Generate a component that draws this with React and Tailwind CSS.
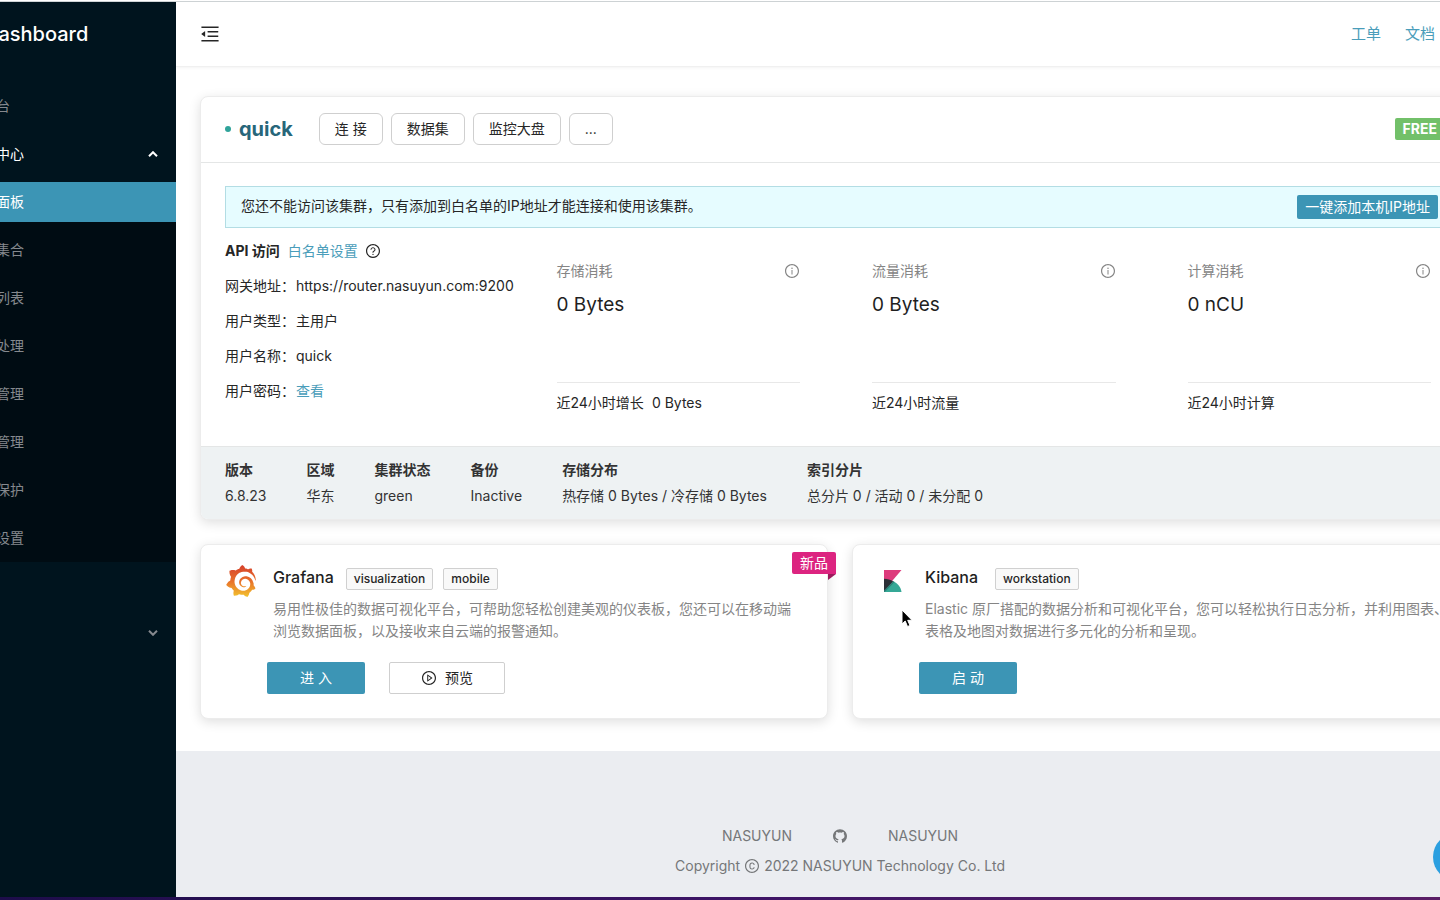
import clsx from "clsx";
import {
  AiOutlineMenuFold,
  AiOutlineQuestionCircle,
  AiOutlineInfoCircle,
  AiOutlinePlayCircle,
  AiOutlineGithub,
  AiOutlineCopyright,
} from "react-icons/ai";
import { SiGrafana } from "react-icons/si";

const subMenu = ["面板", "集合", "列表", "处理", "管理", "管理", "保护", "设置"];

const access = [
  { label: "网关地址", value: "https://router.nasuyun.com:9200" },
  { label: "用户类型", value: "主用户" },
  { label: "用户名称", value: "quick" },
  { label: "用户密码", value: "查看", link: true },
];

const stats = [
  { title: "存储消耗", value: "0 Bytes", footer: "近24小时增长", extra: "0 Bytes" },
  { title: "流量消耗", value: "0 Bytes", footer: "近24小时流量" },
  { title: "计算消耗", value: "0 nCU", footer: "近24小时计算" },
];

const info = [
  { label: "版本", value: "6.8.23" },
  { label: "区域", value: "华东" },
  { label: "集群状态", value: "green" },
  { label: "备份", value: "Inactive" },
  { label: "存储分布", value: "热存储 0 Bytes / 冷存储 0 Bytes" },
  { label: "索引分片", value: "总分片 0 / 活动 0 / 未分配 0" },
];

const Chevron = ({ up }) => (
  <svg viewBox="0 0 10 6" className="h-[6px] w-[10px]" fill="none" stroke="currentColor" strokeWidth="2">
    <path d={up ? "M1 5.2 5 1.2 9 5.2" : "M1 0.8 5 4.8 9 0.8"} />
  </svg>
);

const GrafanaLogo = () => (
  <>
    <svg className="absolute h-0 w-0">
      <defs>
        <linearGradient id="grafana" x1="0" y1="0" x2="0" y2="1">
          <stop offset="0" stopColor="#d5402b" />
          <stop offset="0.5" stopColor="#e8702a" />
          <stop offset="1" stopColor="#f2c22e" />
        </linearGradient>
      </defs>
    </svg>
    <SiGrafana className="h-8 w-8" fill="url(#grafana)" />
  </>
);

const KibanaLogo = () => (
  <svg viewBox="0 0 18 22" className="h-[22px] w-[18px]">
    <path fill="#dd3b7c" d="M0 0h17.500L0 20.500Z" />
    <path fill="#2b2f36" d="M0 8.800c3.400 0 6.500.9 9.300 2.400L0 22Z" />
    <path fill="#35a896" d="M9.300 11.200 0 22h17.500C17 17.500 14 13.500 9.300 11.200Z" />
    <path fill="#2a7f76" d="M9.300 11.200 0 20.500V22h.8L10.500 12Z" />
  </svg>
);

const Tag = ({ children }) => (
  <span className="rounded-xs border border-[#d0d0d0] bg-[#f9f9f9] px-[7px] text-xs leading-5 font-medium text-[#262626]">
    {children}
  </span>
);

const AppCard = ({ logo, name, tags, gap, text, children, ribbon }) => (
  <article className="relative rounded-lg border border-[#ececec] bg-white px-6 pt-[19px] pb-6 shadow-[0_3px_12px_rgba(0,0,0,0.13)]">
    {ribbon && (
      <div className="absolute top-[7px] -right-[9px] z-10">
        <div className="rounded-t-xs rounded-bl-xs bg-[#dc2480] px-2 text-sm leading-[22px] text-white">{ribbon}</div>
        <svg viewBox="0 0 8 6" className="absolute top-[22px] right-0 h-[6px] w-2">
          <path d="M0 0h8L0 6Z" fill="#9b1a5c" />
        </svg>
      </div>
    )}
    <div className="flex">
      <div className="mt-px flex h-8 w-8 shrink-0 items-center">{logo}</div>
      <div className="ml-4 min-w-0 flex-1">
        <div className={clsx("flex items-center", gap)}>
          <h3 className="text-base leading-6 font-medium text-[#1f1f1f]">{name}</h3>
          <div className="mt-1 flex gap-[10px]">
            {tags.map((tag) => (
              <Tag key={tag}>{tag}</Tag>
            ))}
          </div>
        </div>
        <p className="mt-2 max-w-[530px] text-sm leading-[22px] text-[#858585]">{text}</p>
      </div>
    </div>
    <div className="mt-5 ml-[42px] flex gap-6">{children}</div>
  </article>
);

const PrimaryButton = ({ children }) => (
  <button className="h-8 rounded-xs bg-[#3c95b5] px-[33px] text-sm text-white">{children}</button>
);

const Sidebar = () => (
  <aside className="w-44 shrink-0 overflow-hidden bg-[#00141e] text-sm text-[#85898e]">
    <h1 className="-ml-4 pt-[18px] text-xl leading-7 font-medium text-white">Dashboard</h1>
    <nav className="-ml-1 pt-[38px]">
      <a href="#console" className="mb-2 flex h-10 items-center">台</a>
      <button className="flex h-10 w-full items-center justify-between pr-[18px] text-white">
        中心
        <Chevron up />
      </button>
      <ul className="mt-2 bg-[#000c13] pb-1">
        {subMenu.map((item, i) => (
          <li key={i} className="pb-2 last:pb-0">
            <a href={`#menu-${i}`} className={clsx("flex h-10 items-center", i === 0 && "bg-[#3c95b5] text-white")}>
              {item}
            </a>
          </li>
        ))}
      </ul>
      <button aria-label="展开" className="mt-[51px] flex h-10 w-full items-center justify-end pr-[18px]">
        <Chevron />
      </button>
    </nav>
  </aside>
);

const ClusterCard = () => (
  <section className="overflow-hidden rounded-lg border border-[#ececec] bg-white shadow-[0_3px_12px_rgba(0,0,0,0.13)]">
    <header className="flex items-center border-b border-[#e4e6e6] px-6 pt-4 pb-[17px]">
      <span className="mr-2 h-[6px] w-[6px] rounded-full bg-[#2fa39a]" />
      <h2 className="mr-[26px] text-xl leading-8 font-bold text-[#27667a]">quick</h2>
      <div className="flex gap-2">
        {["连 接", "数据集", "监控大盘", "..."].map((name) => (
          <button key={name} className="h-8 rounded-md border border-[#cfcfcf] px-[15px] text-sm">
            {name}
          </button>
        ))}
      </div>
      <span className="mr-[10px] ml-auto rounded-xs bg-[#72c069] px-2 text-sm leading-[22px] font-bold text-white">
        FREE
      </span>
    </header>

    <div className="px-6 pt-[23px] pb-8">
      <div className="flex items-start justify-between border border-[#b3dde4] bg-[#e6fcff] py-2 pr-4 pl-[15px]">
        <p className="text-sm leading-[22px]">您还不能访问该集群，只有添加到白名单的IP地址才能连接和使用该集群。</p>
        <button className="h-6 rounded-xs bg-[#3c95b5] px-2 text-sm text-white">一键添加本机IP地址</button>
      </div>

      <div className="-mx-4 grid grid-cols-4">
        <div className="pt-3 pl-4 text-sm leading-[22px]">
          <div className="flex items-center">
            <strong className="mr-2">API 访问</strong>
            <a href="#whitelist" className="mr-[7px] text-[#4a9dba]">白名单设置</a>
            <AiOutlineQuestionCircle className="text-base" />
          </div>
          <dl>
            {access.map((row) => (
              <div key={row.label} className="mt-[13px] flex whitespace-nowrap">
                <dt className="w-[71px] shrink-0">{row.label}：</dt>
                <dd>{row.link ? <a href="#password" className="text-[#4a9dba]">{row.value}</a> : row.value}</dd>
              </div>
            ))}
          </dl>
        </div>
        {stats.map((stat) => (
          <div key={stat.title} className="pt-8 pr-10 pl-8 text-sm leading-[22px]">
            <div className="flex items-center justify-between text-[#858585]">
              {stat.title}
              <AiOutlineInfoCircle className="text-base" />
            </div>
            <p className="mt-2 h-[92px] text-[19px] leading-[30px] text-[#1f1f1f]">{stat.value}</p>
            <p className="border-t border-[#e8e8e8] pt-[9px]">
              {stat.footer}
              {stat.extra && <span className="ml-2">{stat.extra}</span>}
            </p>
          </div>
        ))}
      </div>
    </div>

    <dl className="flex gap-10 border-t border-[#e4e6e6] bg-[#eef2f3] px-6 pt-3 pb-3 text-sm leading-[22px] whitespace-nowrap text-[#333]">
      {info.map((item) => (
        <div key={item.label}>
          <dt className="font-bold">{item.label}</dt>
          <dd className="mt-1">{item.value}</dd>
        </div>
      ))}
    </dl>
  </section>
);

const App = () => {
  return (
    <div className="relative flex min-h-screen flex-col overflow-hidden bg-white font-[Inter,'Noto_Sans_CJK_SC',sans-serif] text-[#262626]">
      <div className="h-[2px] border-b border-[#cfd4d6]" />
      <div className="flex flex-1">
        <Sidebar />
        {/* content column runs past the right edge of the window */}
        <div className="-mr-16 flex min-w-0 flex-1 flex-col">
          <header className="flex h-[65px] items-center border-b border-[#f0f0f0] pr-[69px] pl-[23px] shadow-[0_1px_3px_rgba(0,0,0,0.05)]">
            <button aria-label="折叠菜单">
              <AiOutlineMenuFold className="text-[22px]" />
            </button>
            <nav className="ml-auto flex gap-6 text-[15px] text-[#4a9dba]">
              <a href="#tickets">工单</a>
              <a href="#docs">文档</a>
            </nav>
          </header>

          <main className="px-6 pt-[29px] pb-8">
            <ClusterCard />
            <div className="mt-6 grid grid-cols-2 gap-6">
              <AppCard
                logo={<GrafanaLogo />}
                name="Grafana"
                tags={["visualization", "mobile"]}
                gap="gap-3"
                ribbon="新品"
                text="易用性极佳的数据可视化平台，可帮助您轻松创建美观的仪表板，您还可以在移动端浏览数据面板，以及接收来自云端的报警通知。"
              >
                <PrimaryButton>进 入</PrimaryButton>
                <button className="flex h-8 items-center gap-2 rounded-xs border border-[#cfcfcf] px-[31px] text-sm">
                  <AiOutlinePlayCircle className="text-base" />
                  预览
                </button>
              </AppCard>
              <AppCard
                logo={<div className="pl-[7px]"><KibanaLogo /></div>}
                name="Kibana"
                tags={["workstation"]}
                gap="gap-[17px]"
                text="Elastic 原厂搭配的数据分析和可视化平台，您可以轻松执行日志分析，并利用图表、表格及地图对数据进行多元化的分析和呈现。"
              >
                <PrimaryButton>启 动</PrimaryButton>
              </AppCard>
            </div>
          </main>

          <footer className="flex flex-1 flex-col items-center bg-[#ebedf1] pt-[74px] text-sm leading-[22px] text-[#757779]">
            <div className="flex items-center gap-10">
              <a href="#home">NASUYUN</a>
              <a href="#github" aria-label="GitHub"><AiOutlineGithub className="text-base" /></a>
              <a href="#about">NASUYUN</a>
            </div>
            <p className="mt-2 flex items-center gap-1">
              Copyright <AiOutlineCopyright className="text-base" /> 2022 NASUYUN Technology Co. Ltd
            </p>
          </footer>
        </div>
      </div>
      <div className="h-[3px] bg-linear-to-r from-[#1d0d4a] via-[#3d1466] to-[#5a1e66]" />

      <button aria-label="在线客服" className="absolute -right-[41px] bottom-[19px] h-12 w-12 rounded-full bg-[#2b9fe0]" />
      <svg viewBox="0 0 12 19" className="absolute top-[609px] left-[901px] h-[19px] w-3">
        <path d="M1 1v14l3.200-3 2.300 5.500 2.500-1-2.300-5.200H11Z" fill="#000" stroke="#fff" strokeWidth="1" />
      </svg>
    </div>
  );
};

export default App;
